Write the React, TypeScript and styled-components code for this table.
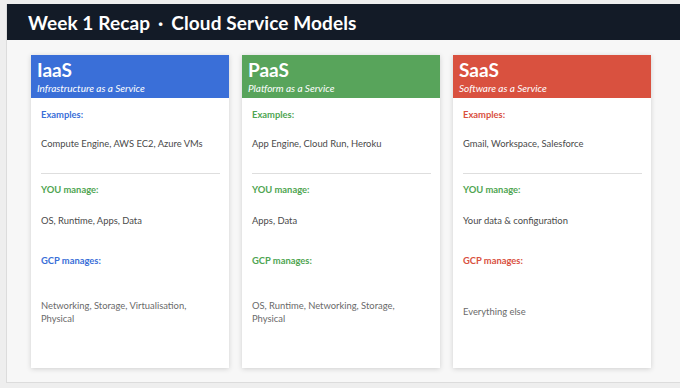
import styled, { createGlobalStyle } from 'styled-components'
import { FunctionComponent, ReactElement } from 'react'

const GlobalStyle = createGlobalStyle`
    html, body {
        margin: 0;
        padding: 0;
        background: #eeeeee;
        font-family: Lato, 'Open Sans', sans-serif;
    }
`

const Frame = styled.div`
    margin: 4px 0 0 6px;
    height: 379px;
    background: #f7f7f7;
    border-left: 1px solid #dcdcdc;
    border-bottom: 1px solid #dcdcdc;
    box-sizing: border-box;
`

const TitleBar = styled.header`
    height: 36px;
    background: #131b27;
    display: flex;
    align-items: center;
    padding-left: 21px;
`

const Title = styled.h1`
    margin: 0;
    color: #ffffff;
    font-size: 19px;
    font-weight: 700;
    letter-spacing: 0.1px;
`

const Dot = styled.span`
    margin: 0 8px;
`

const CardRow = styled.section`
    display: flex;
    gap: 13px;
    padding: 15px 0 0 24px;
`

const Card = styled.article`
    width: 198px;
    height: 313px;
    background: #ffffff;
    box-shadow: 0 1px 5px rgba(0, 0, 0, 0.16);
    display: flex;
    flex-direction: column;
`

const CardHead = styled.div<{ $accent: string }>`
    height: 43px;
    box-sizing: border-box;
    background: ${(p) => p.$accent};
    padding: 4px 6px 0;
    color: #ffffff;
`

const Model = styled.div`
    font-size: 19px;
    font-weight: 700;
    line-height: 22px;
`

const Expansion = styled.div`
    font-size: 10px;
    font-style: italic;
    line-height: 12px;
    margin-top: 1px;
`

const CardBody = styled.div`
    flex: 1;
    display: flex;
    flex-direction: column;
    padding: 11px 9px 12px 10px;
`

const Label = styled.div<{ $color: string }>`
    font-size: 9.4px;
    font-weight: 700;
    line-height: 12px;
    color: ${(p) => p.$color};
`

const Value = styled.div<{ $gap: number }>`
    font-size: 9.4px;
    line-height: 12px;
    color: #4a4a4a;
    margin-top: ${(p) => p.$gap}px;
`

const Divider = styled.hr`
    border: none;
    border-top: 1px solid #dedede;
    margin: 23px 0 10px;
    width: 179px;
`

const Spacer = styled.div`
    height: 28px;
`

const Rest = styled.div`
    flex: 1;
    display: flex;
    align-items: center;
    max-width: 176px;
    font-size: 9.4px;
    line-height: 13px;
    color: #6a6a6a;
`

type Model = {
    name: string
    expansion: string
    accent: string
    examples: string
    youManage: string
    gcpManages: string
}

const GREEN = '#4fa552'

const models: Model[] = [
    {
        name: 'IaaS',
        expansion: 'Infrastructure as a Service',
        accent: '#3a6fd8',
        examples: 'Compute Engine, AWS EC2, Azure VMs',
        youManage: 'OS, Runtime, Apps, Data',
        gcpManages: 'Networking, Storage, Virtualisation, Physical',
    },
    {
        name: 'PaaS',
        expansion: 'Platform as a Service',
        accent: '#58a45b',
        examples: 'App Engine, Cloud Run, Heroku',
        youManage: 'Apps, Data',
        gcpManages: 'OS, Runtime, Networking, Storage, Physical',
    },
    {
        name: 'SaaS',
        expansion: 'Software as a Service',
        accent: '#d9513f',
        examples: 'Gmail, Workspace, Salesforce',
        youManage: 'Your data & configuration',
        gcpManages: 'Everything else',
    },
]

const labelColor = (m: Model): string =>
    m.name === 'PaaS' ? GREEN : m.accent

const ModelCard: FunctionComponent<{ model: Model }> = ({
    model,
}): ReactElement => {
    return (
        <Card>
            <CardHead $accent={model.accent}>
                <Model>{model.name}</Model>
                <Expansion>{model.expansion}</Expansion>
            </CardHead>
            <CardBody>
                <Label $color={labelColor(model)}>Examples:</Label>
                <Value $gap={17}>{model.examples}</Value>
                <Divider />
                <Label $color={GREEN}>YOU manage:</Label>
                <Value $gap={19}>{model.youManage}</Value>
                <Spacer />
                <Label $color={labelColor(model)}>GCP manages:</Label>
                <Rest>{model.gcpManages}</Rest>
            </CardBody>
        </Card>
    )
}

const App: FunctionComponent = (): ReactElement => {
    return (
        <>
            <GlobalStyle />
            <Frame>
                <TitleBar>
                    <Title>
                        Week 1 Recap<Dot>·</Dot>Cloud Service Models
                    </Title>
                </TitleBar>
                <CardRow>
                    {models.map((m) => (
                        <ModelCard key={m.name} model={m} />
                    ))}
                </CardRow>
            </Frame>
        </>
    )
}

export default App
